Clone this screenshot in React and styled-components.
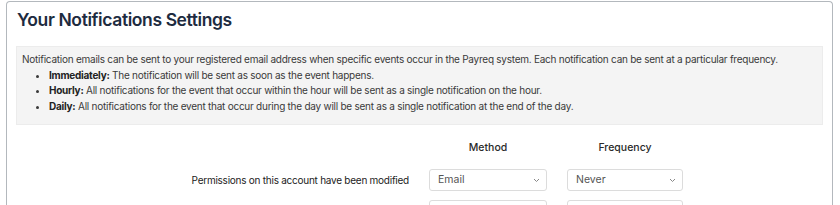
import React from "react";
import styled, { createGlobalStyle } from "styled-components";

const GlobalStyle = createGlobalStyle`
  html, body {
    margin: 0;
    padding: 0;
    background: #ffffff;
    font-family: "Inter", "Liberation Sans", sans-serif;
    overflow: hidden;
  }
`;

const Card = styled.section`
  margin: 1px 7px 0 6px;
  border: 1px solid #b3b8bd;
  border-bottom: none;
  border-radius: 4px 4px 0 0;
  height: 220px;
  background: #fff;
`;

const Title = styled.h2`
  margin: 0;
  padding: 6px 10px 0;
  height: 32px;
  font-size: 17.5px;
  font-weight: 600;
  color: #1d2b40;
  letter-spacing: -0.4px;
  line-height: 24px;
`;

const InfoBox = styled.div`
  margin: 6px 9px 0;
  padding: 5px 5px 10px;
  background: #f4f4f4;
  border: 1px solid #ececec;
  font-size: 10px;
  line-height: 15.5px;
  color: #3a3a3a;
  letter-spacing: -0.25px;
`;

const Intro = styled.p`
  margin: 0;
  white-space: nowrap;
`;

const List = styled.ul`
  margin: 0;
  padding-left: 27px;
  list-style: disc;
`;

const Item = styled.li`
  b {
    font-weight: 700;
    color: #222;
  }
`;

const Grid = styled.div`
  display: grid;
  grid-template-columns: 402px 118px 116px;
  column-gap: 20px;
  row-gap: 9px;
  align-items: center;
  margin-top: 13px;
`;

const ColHead = styled.div`
  text-align: center;
  font-size: 10.5px;
  font-weight: 500;
  color: #2a2a2a;
  height: 20px;
  line-height: 20px;
  margin-bottom: 2px;
`;

const Label = styled.div`
  text-align: right;
  font-size: 10px;
  font-weight: 400;
  color: #222;
  letter-spacing: -0.25px;
`;

const Select = styled.div`
  height: 22px;
  box-sizing: border-box;
  border: 1px solid #dcdcdc;
  border-radius: 3px;
  padding: 0 0 0 8px;
  font-size: 10.5px;
  line-height: 20px;
  color: #555;
  display: flex;
  align-items: center;
  justify-content: space-between;
`;

const Chevron = () => (
  <svg width="7" height="5" viewBox="0 0 7 5" style={{ marginRight: 6 }}>
    <path d="M1 1l2.5 2.5L6 1" fill="none" stroke="#888" strokeWidth="1" />
  </svg>
);

const rows = [
  { label: "Permissions on this account have been modified", method: "Email", freq: "Never" },
  { label: "", method: "", freq: "" },
];

export default function App() {
  return (
    <>
      <GlobalStyle />
      <Card>
        <Title>Your Notifications Settings</Title>
        <InfoBox>
          <Intro>
            Notification emails can be sent to your registered email address when specific events occur in the Payreq system. Each notification can be sent at a particular frequency.
          </Intro>
          <List>
            <Item><b>Immediately:</b> The notification will be sent as soon as the event happens.</Item>
            <Item><b>Hourly:</b> All notifications for the event that occur within the hour will be sent as a single notification on the hour.</Item>
            <Item><b>Daily:</b> All notifications for the event that occur during the day will be sent as a single notification at the end of the day.</Item>
          </List>
        </InfoBox>
        <Grid>
          <div />
          <ColHead>Method</ColHead>
          <ColHead>Frequency</ColHead>
          {rows.map((r, i) => (
            <React.Fragment key={i}>
              <Label>{r.label}</Label>
              <Select>{r.method}<Chevron /></Select>
              <Select>{r.freq}<Chevron /></Select>
            </React.Fragment>
          ))}
        </Grid>
      </Card>
    </>
  );
}
